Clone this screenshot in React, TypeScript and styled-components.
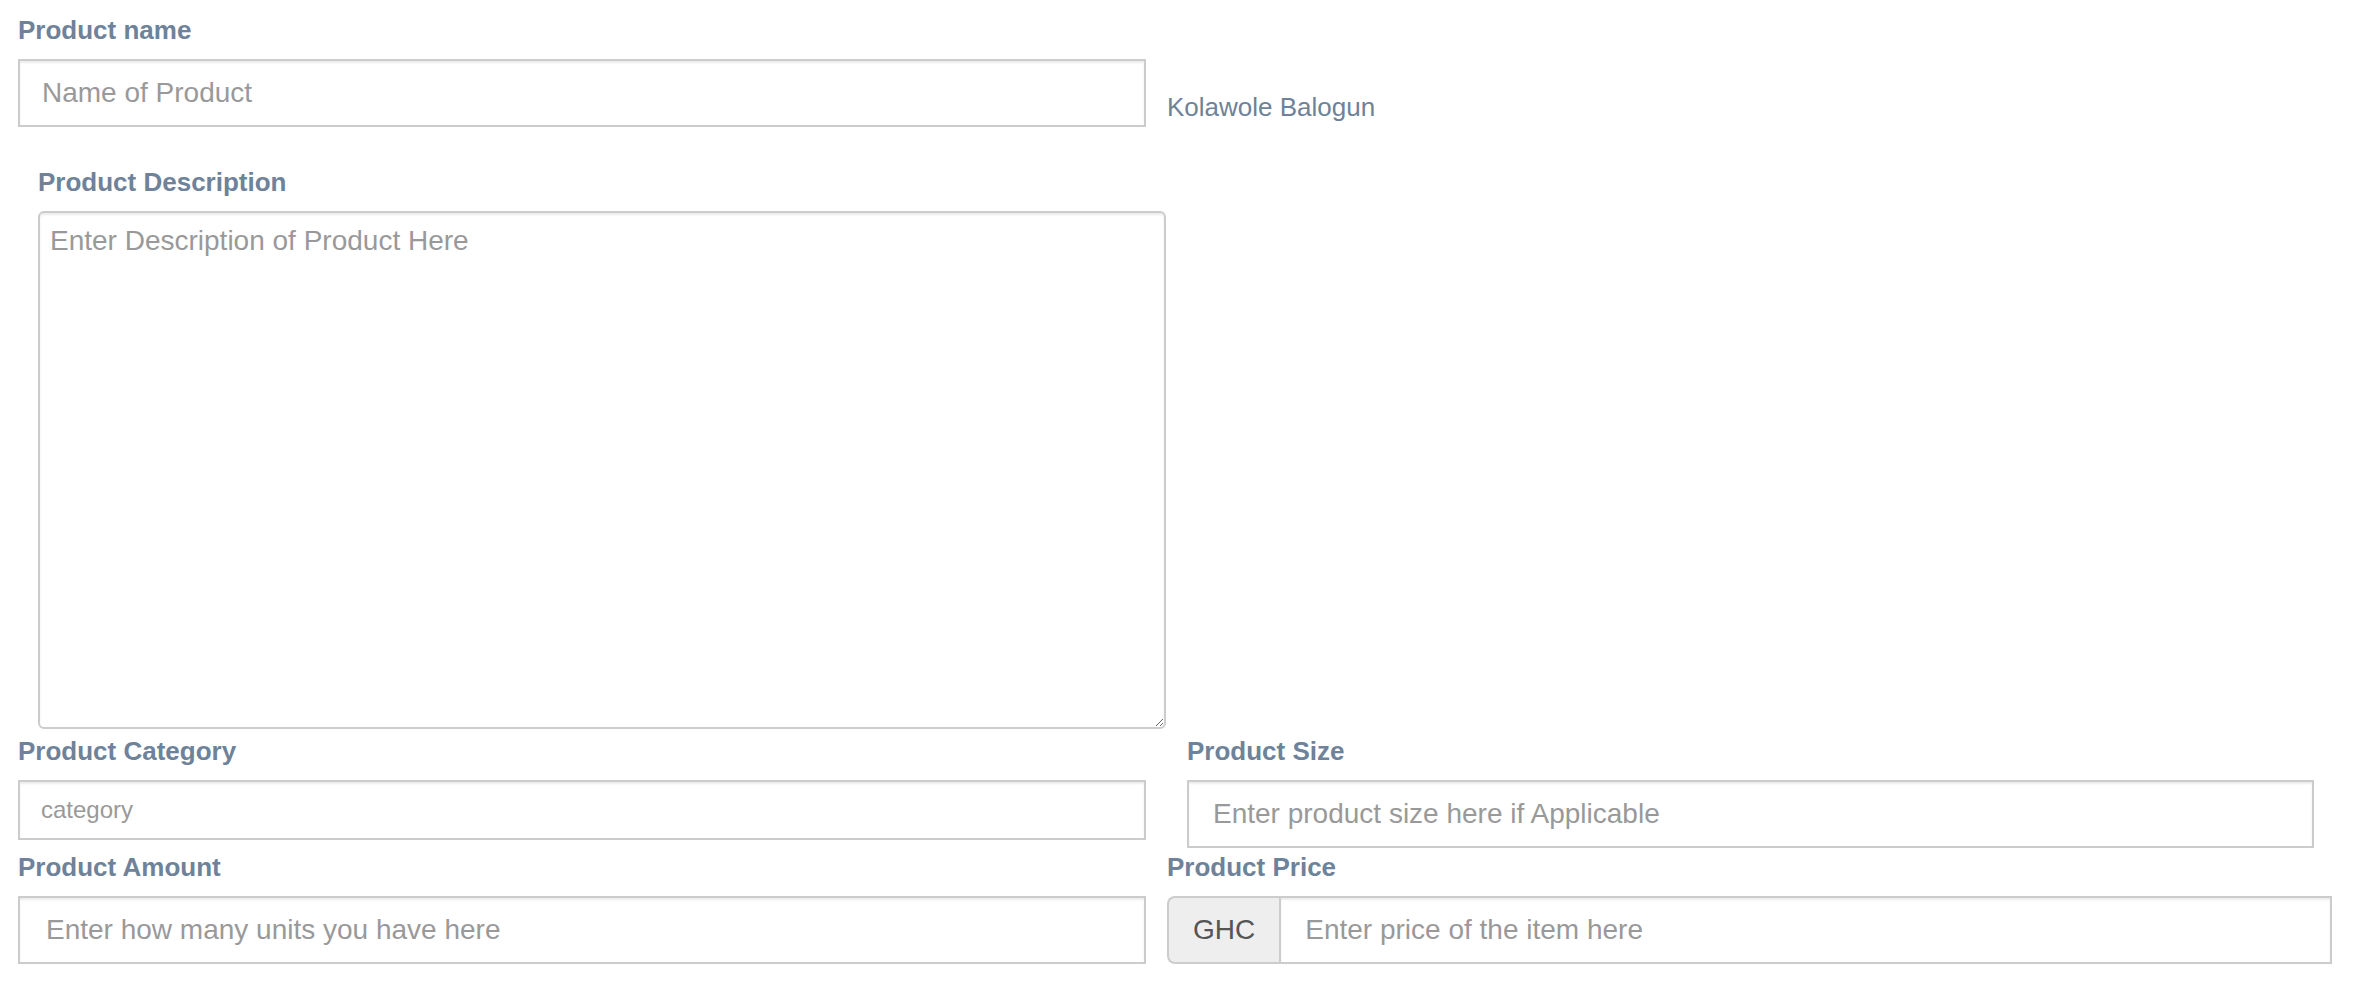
import React from "react";
import styled, { createGlobalStyle } from "styled-components";

const GlobalStyle = createGlobalStyle`
  html, body {
    margin: 0;
    padding: 0;
    background: #ffffff;
  }
  body {
    font-family: "Liberation Sans", Arial, Helvetica, sans-serif;
    color: #333333;
  }
  * { box-sizing: border-box; }
`;

const LABEL_COLOR = "#6e8299";

const Form = styled.form`
  padding: 15px 0 0 18px;
`;

const TopRow = styled.div`
  display: flex;
  gap: 21px;
  margin-bottom: 40px;
`;

const Field = styled.div<{ $width: number; $indent?: number }>`
  display: flex;
  flex-direction: column;
  width: ${(p) => p.$width + (p.$indent ?? 0)}px;
  padding-left: ${(p) => p.$indent ?? 0}px;
`;

const Label = styled.label`
  display: block;
  font-weight: 700;
  font-size: 26px;
  line-height: 30px;
  color: ${LABEL_COLOR};
  margin: 0 0 14px 0;
`;

const Owner = styled.span`
  align-self: flex-end;
  margin-bottom: 5px;
  font-size: 26px;
  line-height: 30px;
  color: ${LABEL_COLOR};
`;

const TextInput = styled.input<{ $pad?: number; $height?: number; $size?: number }>`
  display: block;
  width: 100%;
  height: ${(p) => p.$height ?? 68}px;
  padding: 0 16px 0 ${(p) => p.$pad ?? 24}px;
  font-family: inherit;
  font-size: ${(p) => p.$size ?? 28}px;
  color: #555555;
  background: #ffffff;
  border: 2px solid #cccccc;
  border-radius: 0;
  box-shadow: inset 0 2px 2px rgba(0, 0, 0, 0.075);
  outline: none;
  &::placeholder {
    color: #999999;
    opacity: 1;
  }
`;

const TextArea = styled.textarea`
  display: block;
  width: 100%;
  height: 518px;
  padding: 8px 10px;
  font-family: inherit;
  font-size: 28px;
  line-height: 40px;
  color: #555555;
  background: #ffffff;
  border: 2px solid #cccccc;
  border-radius: 6px;
  box-shadow: inset 0 2px 2px rgba(0, 0, 0, 0.075);
  outline: none;
  &::placeholder {
    color: #999999;
    opacity: 1;
  }
`;

const FieldRow = styled.div<{ $cols: string; $gap: number; $top: number }>`
  display: grid;
  grid-template-columns: ${(p) => p.$cols};
  column-gap: ${(p) => p.$gap}px;
  align-items: start;
  margin-top: ${(p) => p.$top}px;
`;

const Column = styled.div`
  display: flex;
  flex-direction: column;
`;

const InputGroup = styled.div`
  display: flex;
  width: 100%;
  height: 68px;
`;

const Addon = styled.span`
  display: flex;
  align-items: center;
  padding: 0 24px;
  font-size: 28px;
  color: #555555;
  background: #eeeeee;
  border: 2px solid #cccccc;
  border-right: 0;
  border-radius: 8px 0 0 8px;
`;

const GroupInput = styled(TextInput)`
  flex: 1;
  width: auto;
  height: 68px;
`;

export default function App() {
  return (
    <>
      <GlobalStyle />
      <Form onSubmit={(e) => e.preventDefault()}>
        <TopRow>
          <Field $width={1128}>
            <Label>Product name</Label>
            <TextInput $pad={22} placeholder="Name of Product" />
          </Field>
          <Owner>Kolawole Balogun</Owner>
        </TopRow>

        <Field $width={1128} $indent={20}>
          <Label>Product Description</Label>
          <TextArea placeholder="Enter Description of Product Here" />
        </Field>

        <FieldRow $cols="1128px 1127px" $gap={41} $top={7}>
          <Column>
            <Label>Product Category</Label>
            <TextInput $pad={21} $height={60} $size={24} placeholder="category" />
          </Column>
          <Column>
            <Label>Product Size</Label>
            <TextInput $pad={24} placeholder="Enter product size here if Applicable" />
          </Column>
        </FieldRow>

        <FieldRow $cols="1128px 1165px" $gap={21} $top={4}>
          <Column>
            <Label>Product Amount</Label>
            <TextInput $pad={26} placeholder="Enter how many units you have here" />
          </Column>
          <Column>
            <Label>Product Price</Label>
            <InputGroup>
              <Addon>GHC</Addon>
              <GroupInput $pad={24} placeholder="Enter price of the item here" />
            </InputGroup>
          </Column>
        </FieldRow>
      </Form>
    </>
  );
}
